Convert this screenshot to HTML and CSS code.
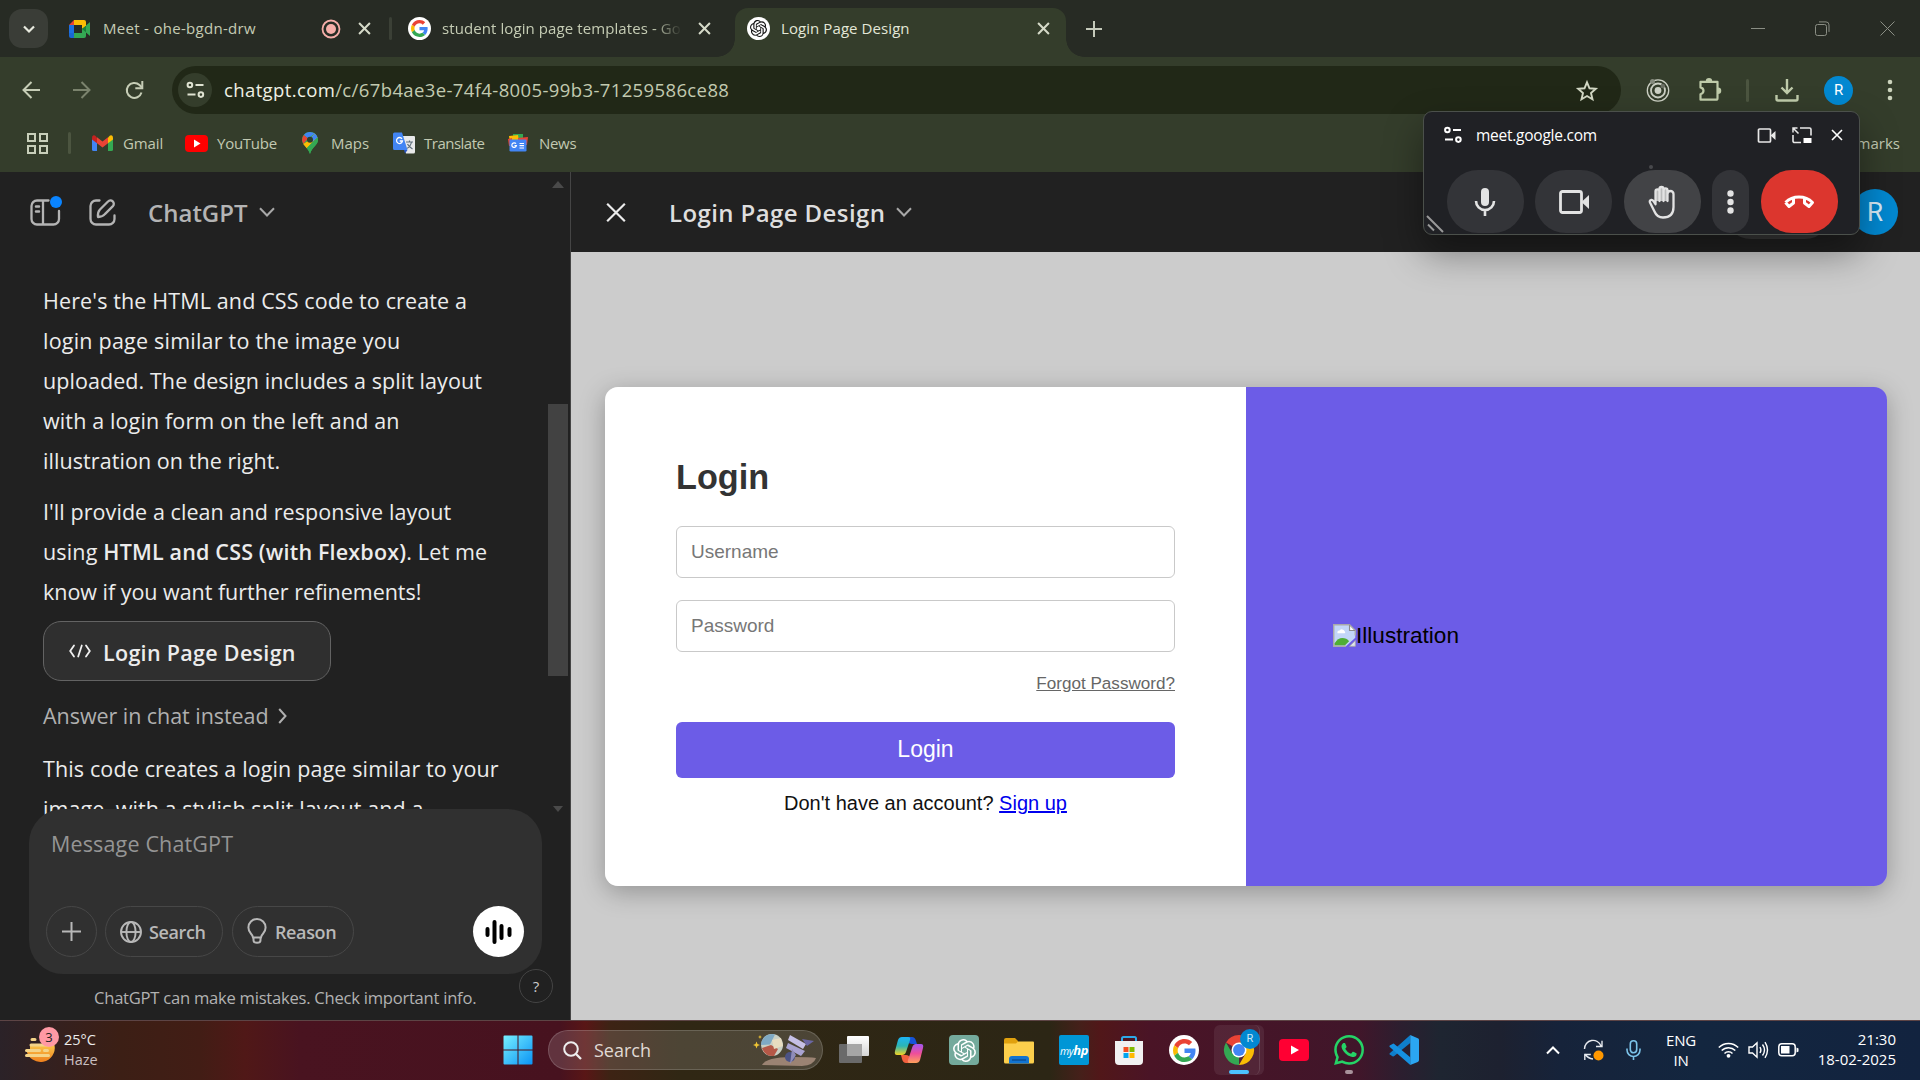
FILE: index.html
```html
<!DOCTYPE html>
<html lang="en">
<head>
<meta charset="utf-8">
<title>Login Page Design</title>
<link rel="stylesheet" href="styles.css">
</head>
<body>
<svg class="defs" width="0" height="0">
  <symbol id="openai" viewBox="0 0 24 24"><path fill="currentColor" d="M22.2819 9.8211a5.9847 5.9847 0 0 0-.5157-4.9108 6.0462 6.0462 0 0 0-6.5098-2.9A6.0651 6.0651 0 0 0 4.9807 4.1818a5.9847 5.9847 0 0 0-3.9977 2.9 6.0462 6.0462 0 0 0 .7427 7.0966 5.98 5.98 0 0 0 .511 4.9107 6.051 6.051 0 0 0 6.5146 2.9001A5.9847 5.9847 0 0 0 13.2599 24a6.0557 6.0557 0 0 0 5.7718-4.2058 5.9894 5.9894 0 0 0 3.9977-2.9001 6.0557 6.0557 0 0 0-.7475-7.0729zm-9.022 12.6081a4.4755 4.4755 0 0 1-2.8764-1.0408l.1419-.0804 4.7783-2.7582a.7948.7948 0 0 0 .3927-.6813v-6.7369l2.02 1.1686a.071.071 0 0 1 .038.052v5.5826a4.504 4.504 0 0 1-4.4945 4.4944zm-9.6607-4.1254a4.4708 4.4708 0 0 1-.5346-3.0137l.142.0852 4.783 2.7582a.7712.7712 0 0 0 .7806 0l5.8428-3.3685v2.3324a.0804.0804 0 0 1-.0332.0615L9.74 19.9502a4.4992 4.4992 0 0 1-6.1408-1.6464zM2.3408 7.8956a4.485 4.485 0 0 1 2.3655-1.9728V11.6a.7664.7664 0 0 0 .3879.6765l5.8144 3.3543-2.0201 1.1685a.0757.0757 0 0 1-.071 0l-4.8303-2.7865A4.504 4.504 0 0 1 2.3408 7.872zm16.5963 3.8558L13.1038 8.364 15.1192 7.2a.0757.0757 0 0 1 .071 0l4.8303 2.7913a4.4944 4.4944 0 0 1-.6765 8.1042v-5.6772a.79.79 0 0 0-.407-.667zm2.0107-3.0231l-.142-.0852-4.7735-2.7818a.7759.7759 0 0 0-.7854 0L9.409 9.2297V6.8974a.0662.0662 0 0 1 .0284-.0615l4.8303-2.7866a4.4992 4.4992 0 0 1 6.6802 4.66zM8.3065 12.863l-2.02-1.1638a.0804.0804 0 0 1-.038-.0567V6.0742a4.4992 4.4992 0 0 1 7.3757-3.4537l-.142.0805L8.704 5.459a.7948.7948 0 0 0-.3927.6813zm1.0976-2.3654l2.602-1.4998 2.6069 1.4998v2.9994l-2.5974 1.4997-2.6067-1.4997Z"/></symbol>
  <symbol id="google" viewBox="0 0 48 48">
    <path fill="#ea4335" d="M24 9.5c3.54 0 6.71 1.22 9.21 3.6l6.85-6.85C35.9 2.38 30.47 0 24 0 14.62 0 6.51 5.38 2.56 13.22l7.98 6.19C12.43 13.72 17.74 9.5 24 9.5z"/>
    <path fill="#4285f4" d="M46.98 24.55c0-1.57-.15-3.09-.38-4.55H24v9.02h12.94c-.58 2.96-2.26 5.48-4.78 7.18l7.73 6c4.51-4.18 7.09-10.36 7.09-17.65z"/>
    <path fill="#fbbc05" d="M10.53 28.59c-.48-1.45-.76-2.99-.76-4.59s.27-3.14.76-4.59l-7.98-6.19C.92 16.46 0 20.12 0 24c0 3.88.92 7.54 2.56 10.78l7.97-6.19z"/>
    <path fill="#34a853" d="M24 48c6.48 0 11.93-2.13 15.89-5.81l-7.73-6c-2.15 1.45-4.92 2.3-8.16 2.3-6.26 0-11.57-4.22-13.47-9.91l-7.98 6.19C6.51 42.62 14.62 48 24 48z"/>
  </symbol>
  <symbol id="close" viewBox="0 0 12 12"><path d="M1 1l10 10M11 1L1 11" fill="none" stroke="currentColor"/></symbol>
  <symbol id="chevron" viewBox="0 0 16 10"><path d="M1 1.2l7 7.3 7-7.3" fill="none" stroke="currentColor" stroke-width="2"/></symbol>
  <symbol id="tune" viewBox="0 0 18 18"><g fill="none" stroke="currentColor" stroke-width="2"><circle cx="3.4" cy="4" r="2.3"/><circle cx="14.4" cy="13.6" r="2.3"/><path d="M9 4h8M1 13.6h8"/></g></symbol>
  <symbol id="videocam" viewBox="0 0 30 24"><path d="M3.5 1.5h17a2 2 0 0 1 2 2v17a2 2 0 0 1-2 2h-17a2 2 0 0 1-2-2v-17a2 2 0 0 1 2-2z" fill="none" stroke="currentColor" stroke-width="2.8"/><path d="M22.5 12L30 5v14z" fill="currentColor"/></symbol>
</svg>

<div class="screen">
  <div class="tabstrip">
    <div class="tab-search"><svg width="12" height="8"><path d="M1 1.5l5 5 5-5" fill="none" stroke="#e8eadf" stroke-width="2.2"/></svg></div>
    <div class="tab tab-meet">
      <svg class="favicon" width="21" height="18" viewBox="0 0 21 18"><path fill="#1e6fe0" d="M0 5h5v8H0z"/><path fill="#1967d2" d="M0 13h5v5H2a2 2 0 0 1-2-2z"/><path fill="#ea4335" d="M0 5l5-5v5z"/><path fill="#fbbc04" d="M5 0h10a2 2 0 0 1 2 2v4l-4 3V5H5z"/><path fill="#34a853" d="M5 13h8V9l4-3v10a2 2 0 0 1-2 2H5z"/><path fill="#188038" d="M13 9l4-3.300v6.600z"/><path fill="#34a853" d="M17 5.500L21 2v14l-4-3.500z"/></svg>
      <span class="tab-title">Meet - ohe-bgdn-drw</span>
      <svg class="rec" width="20" height="20"><circle cx="10" cy="10" r="8.500" fill="none" stroke="#f6aea9" stroke-width="1.800"/><circle cx="10" cy="10" r="5" fill="#f6aea9"/></svg>
      <svg class="tab-x" width="13" height="13"><use href="#close" stroke-width="1.900"/></svg>
    </div>
    <div class="tab-sep"></div>
    <div class="tab tab-google">
      <span class="round-icon"><svg width="17" height="17"><use href="#google"/></svg></span>
      <span class="tab-title">student login page templates - Go</span>
      <svg class="tab-x" width="13" height="13"><use href="#close" stroke-width="1.900"/></svg>
    </div>
    <div class="tab tab-active">
      <span class="round-icon dark"><svg width="17" height="17"><use href="#openai"/></svg></span>
      <span class="tab-title">Login Page Design</span>
      <svg class="tab-x" width="13" height="13"><use href="#close" stroke-width="1.900"/></svg>
    </div>
    <svg class="new-tab" width="16" height="16"><path d="M8 0v16M0 8h16" stroke="#c4c9ba" stroke-width="2"/></svg>
    <div class="win-controls">
      <svg width="14" height="14"><path d="M0 6.500h14" stroke="#8a8e84"/></svg>
      <svg width="15" height="15"><rect x=".5" y="3.500" width="11" height="11" rx="2" fill="none" stroke="#8a8e84"/><path d="M4 .9h7a3 3 0 0 1 3 3v7" fill="none" stroke="#8a8e84"/></svg>
      <svg width="15" height="15"><path d="M.5 .5l14 14M14.500 .5l-14 14" stroke="#8a8e84"/></svg>
    </div>
  </div>

  <div class="toolbar">
    <svg class="nav-back" width="18" height="18"><path d="M18 9H2M9.500 1L1.500 9l8 8" fill="none" stroke="#c6cdb6" stroke-width="2"/></svg>
    <svg class="nav-fwd" width="18" height="18"><path d="M0 9h16M8.500 1l8 8-8 8" fill="none" stroke="#7b836d" stroke-width="2"/></svg>
    <svg class="nav-reload" width="19" height="18"><path d="M16.500 11.500A7.500 7.500 0 1 1 14.500 4L17 6.500" fill="none" stroke="#c6cdb6" stroke-width="2"/><path d="M17.300 0v7.200h-7" fill="none" stroke="#c6cdb6" stroke-width="2"/></svg>
    <div class="omnibox">
      <span class="site-info"><svg width="19" height="18"><use href="#tune"/></svg></span>
      <span class="url"><b>chatgpt.com</b>/c/67b4ae3e-74f4-8005-99b3-71259586ce88</span>
      <svg class="star" width="22" height="21" viewBox="0 0 22 21"><path d="M11 2.300l2.500 6 6.300.5-4.800 4.200 1.500 6.300L11 16l-5.500 3.300L7 13 2.200 8.800l6.300-.5z" fill="none" stroke="#d3d8c5" stroke-width="1.900"/></svg>
    </div>
    <div class="ext-row">
      <svg width="24" height="24" viewBox="0 0 24 24"><g fill="none" stroke="#ccd0c4"><circle cx="12" cy="12.500" r="10.700" stroke-width="1.300"/><circle cx="12" cy="12.500" r="7" stroke-width="1.800"/></g><circle cx="12" cy="12.500" r="3.400" fill="#ccd0c4"/><circle cx="6.500" cy="3.500" r="2.500" fill="#858a7d"/><circle cx="16.800" cy="8" r="2.200" fill="#6c7165"/></svg>
      <svg width="24" height="24" viewBox="0 0 24 24"><path d="M2.500 3.800h17v16.400a1.500 1.500 0 0 1-1.500 1.500H2.500v-5.500q3-.8 3-3.400t-3-3.400z" fill="none" stroke="#bfcbaa" stroke-width="2.200" stroke-linejoin="round"/><path d="M7.800 3.300a3.200 3.200 0 0 1 6.400 0zM20 9.500a3.200 3.200 0 0 1 0 6.500z" fill="#bfcbaa"/></svg>
      <i class="tb-sep"></i>
      <svg width="24" height="24" viewBox="0 0 24 24"><path d="M12 1v13M6.500 9.500L12 15l5.500-5.500M1.500 17v4a1.500 1.500 0 0 0 1.500 1.500h18a1.500 1.500 0 0 0 1.500-1.500v-4" fill="none" stroke="#bfcbaa" stroke-width="2.400"/></svg>
      <span class="avatar small">R</span>
      <svg width="6" height="22"><g fill="#ccd4bd"><circle cx="3" cy="3" r="2.300"/><circle cx="3" cy="11" r="2.300"/><circle cx="3" cy="19" r="2.300"/></g></svg>
    </div>
  </div>

  <div class="bookmarks">
    <svg class="apps" width="21" height="21"><g fill="none" stroke="#c8cfba" stroke-width="2"><rect x="1" y="1" width="7" height="7"/><rect x="13" y="1" width="7" height="7"/><rect x="1" y="13" width="7" height="7"/><rect x="13" y="13" width="7" height="7"/></g></svg>
    <i class="bm-sep"></i>
    <span class="bm bm1"><svg width="21" height="16" viewBox="0 0 21 16"><path fill="#4285f4" d="M0 3l5 3.500V16H1.500A1.500 1.500 0 0 1 0 14.500z"/><path fill="#34a853" d="M21 3l-5 3.500V16h3.500a1.500 1.500 0 0 0 1.500-1.500z"/><path fill="#fbbc04" d="M16 2.500L18 .6Q21-.6 21 3v1.500l-5 3.700z"/><path fill="#c5221f" d="M5 2.500L3 .6Q0-.6 0 3v1.500l5 3.700z"/><path fill="#ea4335" d="M5 2.200l5.500 4.200L16 2.200v6l-5.500 4.200L5 8.200z"/></svg><span>Gmail</span></span>
    <span class="bm bm2"><svg width="23" height="17"><rect width="23" height="17" rx="4" fill="#f00"/><path d="M9 4.500v8l6.500-4z" fill="#fff"/></svg><span>YouTube</span></span>
    <span class="bm bm3"><svg width="16" height="22" viewBox="0 0 16 22"><path d="M8 0C3.500 0 0 3.500 0 8c0 5 6 7 8 14 2-7 8-9 8-14 0-4.500-3.500-8-8-8z" fill="#34a853"/><path d="M8 0C5.500 0 3.300 1.100 1.900 2.900L6 6.500 12.800 1.600A8 8 0 0 0 8 0z" fill="#4285f4"/><path d="M1.900 2.900A8 8 0 0 0 0 8l1.200 4L6 6.500z" fill="#ea4335"/><path d="M1.200 12l3.500 4.300 8-8.300L15.500 5.500 12.800 1.600 6 9z" fill="#fbbc04"/><path d="M12.800 1.600L8 7 10 10l5.500-4.500A8 8 0 0 0 12.800 1.600z" fill="#4285f4"/><path d="M15.500 5.500L4.700 16.300C6 18 7.200 19.500 8 22c2-7 8-9 8-14z" fill="#34a853"/><circle cx="8" cy="7.800" r="3" fill="#303d2b"/></svg><span>Maps</span></span>
    <span class="bm bm4"><svg width="22" height="22" viewBox="0 0 22 22"><path d="M9 4h12a1.200 1.200 0 0 1 1 1v15a1.500 1.500 0 0 1-1.500 1.500H13z" fill="#e8e9ea"/><path d="M13 10h7M16.500 8.500V10M18.500 10q-1 5-5 6.500M14.500 12q1.500 3 5 5" stroke="#5f6f7c" fill="none" stroke-width="1.200"/><path d="M1.500.5H9l5.500 17.500H1.500A1.500 1.500 0 0 1 0 16.500V2A1.500 1.500 0 0 1 1.500.5z" fill="#4285f4"/><path d="M14.500 18L12 21.500 11 18z" fill="#2b57c4"/><path d="M9 6.800A3 3 0 1 0 9.500 9H6.700" fill="none" stroke="#fff" stroke-width="1.300"/></svg><span>Translate</span></span>
    <span class="bm bm5"><svg width="20" height="18" viewBox="0 0 20 18"><path fill="#34a853" d="M5 0h10v6H5z"/><path fill="#fbbc04" d="M1 2l9-1 1 6-9 2z"/><path fill="#ea4335" d="M10 4l10-1-1 8h-9z"/><path fill="#ea4335" d="M0 5l4-1v8H1z"/><rect x="1.500" y="5.500" width="17" height="12" rx="1.300" fill="#4285f4"/><path d="M8 9.700a2.300 2.300 0 1 0 .4 2H6.500M11.500 9.500H16M11.500 11.700H16M11.500 14H16" fill="none" stroke="#fff" stroke-width="1.200"/></svg><span>News</span></span>
    <span class="bm-more"><span>All Bookmarks</span></span>
  </div>

  <div class="page">
    <div class="chat">
      <div class="chat-main">
        <div class="chat-header">
          <span class="sidebar-icon"><svg width="30" height="28" viewBox="0 0 30 28"><path d="M18.500 2.500H7A5.500 5.500 0 0 0 1.500 8v13A5.500 5.500 0 0 0 7 26.500h16.500a5.500 5.500 0 0 0 5.500-5.500v-8M13 2.500v24" fill="none" stroke="#b4b4b4" stroke-width="2.300" stroke-linecap="round"/><path d="M6 8.500h3M6 13.500h3" stroke="#b4b4b4" stroke-width="2.500" stroke-linecap="round"/></svg><i></i></span>
          <svg class="compose" width="27" height="27" viewBox="0 0 27 27"><g fill="none" stroke="#b4b4b4" stroke-width="2.300" stroke-linecap="round"><path d="M10.500 1.500H7A5.500 5.500 0 0 0 1.500 7v13A5.500 5.500 0 0 0 7 25.500h13a5.500 5.500 0 0 0 5.500-5.500v-3.500"/><path d="M9 18q-.5-5 2-7.500l8-8a3.100 3.100 0 0 1 4.900 4.600l-8 8Q14 17.500 9 18z" stroke-linejoin="round"/></g></svg>
          <span class="model">ChatGPT</span>
          <svg class="model-chev" width="16" height="10"><use href="#chevron"/></svg>
        </div>
        <div class="messages">
          <p><span>Here's the HTML and CSS code to create a</span><span class="wide">login page similar to the image you</span><span class="tight">uploaded. The design includes a split layout</span><span>with a login form on the left and an</span><span class="tight">illustration on the right.</span></p>
          <p><span class="tight">I'll provide a clean and responsive layout</span><span class="mixed">using <b>HTML and CSS (with Flexbox)</b>. Let me</span><span class="flat">know if you want further refinements!</span></p>
          <div class="canvas-btn"><svg width="22" height="14" viewBox="0 0 22 14"><path d="M5 1.500L1.200 7 5 12.500M17 1.500L20.800 7 17 12.500M12.800 1.500L9.200 12.500" fill="none" stroke="#f0f0f0" stroke-width="1.800" stroke-linecap="round"/></svg><span>Login Page Design</span></div>
          <div class="answer"><span>Answer in chat instead</span><svg width="9" height="16"><path d="M1.200 1l6.300 7-6.300 7" fill="none" stroke="#b0b0b0" stroke-width="2"/></svg></div>
          <p><span>This code creates a login page similar to your</span><span class="tight">image, with a stylish split layout and a</span></p>
        </div>
        <div class="composer">
          <div class="placeholder">Message ChatGPT</div>
          <div class="tools">
            <span class="pill plus"><svg width="19" height="19"><path d="M9.500 0v19M0 9.500h19" stroke="#b8b8b8" stroke-width="2"/></svg></span>
            <span class="pill search"><svg width="24" height="22" viewBox="0 0 24 22"><g fill="none" stroke="#b8b8b8" stroke-width="1.900"><circle cx="12" cy="11" r="10"/><ellipse cx="12" cy="11" rx="4.600" ry="10"/><path d="M2 11h20"/></g></svg><span>Search</span></span>
            <span class="pill reason"><svg width="20" height="24" viewBox="0 0 20 24"><path d="M6 17.500q-.3-2-2-3.800a8.600 8.600 0 1 1 12 0q-1.700 1.800-2 3.800zM6.500 18v2.200q0 2.500 3.500 2.500t3.500-2.500V18" fill="none" stroke="#b8b8b8" stroke-width="2"/></svg><span>Reason</span></span>
            <span class="voice"><svg width="27" height="24"><path d="M2.500 9v6M9.500 2v20M16.500 6v12M24.500 9v6" stroke="#000" stroke-width="4" stroke-linecap="round"/></svg></span>
          </div>
        </div>
        <div class="disclaimer">ChatGPT can make mistakes. Check important info.</div>
        <span class="help">?</span>
      </div>
      <div class="scrollbar"><i class="up"></i><i class="thumb"></i><i class="down"></i></div>
    </div>

    <div class="canvas">
      <div class="canvas-header">
        <svg width="20" height="21" viewBox="0 0 12 12" class="canvas-x"><path d="M.7.7l10.600 10.600M11.300.7L.7 11.300" stroke="#ececec" stroke-width="1.300"/></svg>
        <span class="canvas-title">Login Page Design</span>
        <svg class="canvas-chev" width="16" height="10"><use href="#chevron"/></svg>
        <span class="hidden-btn"></span>
        <span class="avatar big">R</span>
      </div>
      <div class="preview">
        <div class="card">
          <div class="form">
            <h2>Login</h2>
            <div class="field">Username</div>
            <div class="field">Password</div>
            <div class="forgot"><u>Forgot Password?</u></div>
            <div class="login-btn">Login</div>
            <div class="signup">Don't have an account? <u>Sign up</u></div>
          </div>
          <div class="art"><svg width="23" height="23" viewBox="0 0 16 16"><path d="M.5.5h11l4 4v5L9 15.500H.5z" fill="#c3d6f8"/><path d="M1 15v-1.500q2.500-3.800 5.500-3.800t4.700 2.300L8.200 15z" fill="#4fae35"/><path d="M3 6.200a1.500 1.500 0 0 1 1.600-1.600 2 2 0 0 1 3.500.4 1 1 0 0 1 .1 1.500H3.200z" fill="#fff"/><path d="M11.500.5v4h4z" fill="#fff"/><path d="M9 15.500H.5V.5h11l4 4V8" fill="none" stroke="#a9a9a9"/><path d="M11.500.5v4h4" fill="none" stroke="#8d8d8d" stroke-width=".8"/><path d="M15.500 11.500v4h-4z" fill="#dfe5ee" stroke="#a9a9a9" stroke-width=".6"/></svg><span>Illustration</span></div>
        </div>
      </div>
    </div>
  </div>

  <div class="taskbar">
    <div class="weather">
      <span class="weather-icon"><svg width="30" height="29" viewBox="0 0 30 29"><defs><linearGradient id="sun" x1="0" y1="0" x2="0" y2="1"><stop offset="0" stop-color="#fbc64a"/><stop offset="1" stop-color="#ee7f1d"/></linearGradient></defs><path d="M5 9h24.500a13.500 13.500 0 0 1-28 5.500H5z" fill="url(#sun)"/><path d="M7 3.500h3M6 9h16M1.500 14.500h13M19.500 14.500h3M1.500 19.500h22" stroke="#f4d489" stroke-width="3" stroke-linecap="round"/></svg><i>3</i></span>
      <span class="weather-text"><span>25°C</span><small>Haze</small></span>
    </div>
    <div class="dock">
      <svg class="ti" width="30" height="30"><defs><linearGradient id="win" x1="0" y1="0" x2="1" y2="1"><stop offset="0" stop-color="#77f0ff"/><stop offset="1" stop-color="#0a93f5"/></linearGradient></defs><path fill="url(#win)" d="M.5 1.500A1 1 0 0 1 1.500.5H14.500v14H.5zM15.500.5h13a1 1 0 0 1 1 1v13h-14zM.5 15.500h14v14h-13a1 1 0 0 1-1-1zM15.500 15.500h14v13a1 1 0 0 1-1 1h-13z"/></svg>
      <div class="search-pill"><svg width="19" height="19"><circle cx="8" cy="8" r="6.800" fill="none" stroke="#eee" stroke-width="2"/><path d="M13 13l5 5" stroke="#eee" stroke-width="2.300"/></svg><span>Search</span>
        <svg class="art-icon" width="62" height="31" viewBox="0 0 62 31"><path d="M8 30q4-8 30-8 18 0 24 1-2 7-14 8z" fill="#9b8373"/><circle cx="18" cy="10" r="11" fill="#c9cfc4"/><path d="M7 10a11 11 0 0 1 14-10.500l-5 10z" fill="#7fa9c4"/><path d="M8 13l9-3 7 4-4 7a11 11 0 0 1-12-8z" fill="#b55847"/><path d="M18 5l9-2 2 8-9 3z" fill="#e8dcc0"/><path d="M2.500 6.500l1 2.500 2.500 1-2.500 1-1 2.500-1-2.500-2.500-1 2.500-1zM6 0l.6 1.400L8 2l-1.400.6L6 4l-.6-1.400L4 2l1.400-.6z" fill="#f0c534"/><path d="M36 0l16 9-3 5-15-9z" fill="#c6c0e6"/><path d="M34 8l17 8-4 5-15-8z" fill="#a9a3d1"/><path d="M48 4l12 2-7 5z" fill="#6b67a3"/><circle cx="36" cy="22" r="5" fill="#4c5385"/><path d="M38 14l4 6-6 9z" fill="#8f8cb8"/></svg>
      </div>
      <svg class="ti" width="30" height="30"><defs><linearGradient id="tv" x1="0" y1="0" x2="0" y2="1"><stop offset="0" stop-color="#fff"/><stop offset="1" stop-color="#d5d5d5"/></linearGradient></defs><rect x="0" y="9" width="23" height="19" rx="1" fill="#6a6a6a"/><rect x="8" y="1" width="22" height="20" rx="1" fill="url(#tv)"/><path d="M8 9h15v12H8z" fill="#a5a5a5"/></svg>
      <svg class="ti" width="30" height="30" viewBox="0 0 30 30"><defs><linearGradient id="cp1" x1="0" y1="0" x2="0" y2="1"><stop offset="0" stop-color="#1db5f5"/><stop offset=".5" stop-color="#2bb5b5"/><stop offset="1" stop-color="#f4d321"/></linearGradient><linearGradient id="cp2" x1="0" y1="0" x2="0" y2="1"><stop offset="0" stop-color="#a156f0"/><stop offset=".5" stop-color="#ee4f9a"/><stop offset="1" stop-color="#ffa15b"/></linearGradient></defs><path d="M13 2h5q3 0 4 4l1 3h-5q-3 0-4-2z" fill="#1653d8"/><path d="M8 2h6q3 0 2 3l-4 12q-1 3-4 3H3q-3 0-2-4L4 5q1-3 4-3z" fill="url(#cp1)"/><path d="M17 28h-5q-3 0-4-4l-1-4h5q3 0 4 3z" fill="#f2603e"/><path d="M22 28h-6q-3 0-2-3l4-12q1-4 4-4h5q3 0 2 4l-3 12q-1 3-4 3z" fill="url(#cp2)"/></svg>
      <span class="ti gpt"><svg width="23" height="23"><use href="#openai"/></svg></span>
      <svg class="ti" width="30" height="30"><path d="M0 5a2 2 0 0 1 2-2h9l3 3v5H0z" fill="#e0a10e"/><path d="M0 8.500h12l2-2h15a1 1 0 0 1 1 1V27a1.500 1.500 0 0 1-1.500 1.500h-27A1.500 1.500 0 0 1 0 27z" fill="#fccf4c"/><path d="M5 28.500V24a3 3 0 0 1 3-3h14a3 3 0 0 1 3 3v4.500z" fill="#1274d1"/><path d="M8 25h14" stroke="#0b4f96" stroke-width="1.500"/></svg>
      <span class="ti hp"><span>my<b>hp</b></span></span>
      <svg class="ti" width="30" height="30"><path d="M8 7V3.500A1.500 1.500 0 0 1 9.500 2h11A1.500 1.500 0 0 1 22 3.500V7" fill="none" stroke="#2da9e9" stroke-width="2"/><path d="M1 6h28v20a4 4 0 0 1-4 4H5a4 4 0 0 1-4-4z" fill="#f1f1f1"/><path d="M9.500 12h5v5h-5z" fill="#f25022"/><path d="M15.500 12h5v5h-5z" fill="#7fba00"/><path d="M9.500 18h5v5h-5z" fill="#00a4ef"/><path d="M15.500 18h5v5h-5z" fill="#ffb900"/></svg>
      <span class="ti round-icon lg"><svg width="23" height="23"><use href="#google"/></svg></span>
      <span class="ti chrome"><svg width="30" height="30" viewBox="0 0 48 48"><path fill="#ea4335" d="M24 24L3.200 12A24 24 0 0 1 44.800 12z"/><path fill="#34a853" d="M24 24v24A24 24 0 0 1 3.200 12l10.400 18z"/><path fill="#fbbc04" d="M24 12h20.800A24 24 0 0 1 24 48l10.400-18z"/><circle cx="24" cy="24" r="12" fill="#fff"/><circle cx="24" cy="24" r="9.500" fill="#4285f4"/></svg><i class="badge">R</i><i class="active-bar"></i></span>
      <svg class="ti" width="30" height="30"><rect y="4" width="30" height="22" rx="4" fill="#ff0033"/><path d="M12 10.500v9l8-4.500z" fill="#fff"/></svg>
      <span class="ti wa"><svg width="30" height="30" viewBox="0 0 24 24"><path fill="#25d366" d="M17.472 14.382c-.297-.149-1.758-.867-2.030-.967-.273-.099-.471-.148-.67.15-.197.297-.767.966-.94 1.164-.173.199-.347.223-.644.075-.297-.15-1.255-.463-2.390-1.475-.883-.788-1.480-1.761-1.653-2.059-.173-.297-.018-.458.13-.606.134-.133.298-.347.446-.52.149-.174.198-.298.298-.497.099-.198.05-.371-.025-.52-.075-.149-.669-1.612-.916-2.207-.242-.579-.487-.5-.669-.51-.173-.008-.371-.01-.57-.01-.198 0-.52.074-.792.372-.272.297-1.040 1.016-1.040 2.479 0 1.462 1.065 2.875 1.213 3.074.149.198 2.096 3.200 5.077 4.487.709.306 1.262.489 1.694.625.712.227 1.360.195 1.871.118.571-.085 1.758-.719 2.006-1.413.248-.694.248-1.289.173-1.413-.074-.124-.272-.198-.57-.347m-5.421 7.403h-.004a9.870 9.870 0 0 1-5.031-1.378l-.361-.214-3.741.982.998-3.648-.235-.374a9.860 9.860 0 0 1-1.510-5.260c.001-5.450 4.436-9.884 9.888-9.884 2.640 0 5.122 1.030 6.988 2.898a9.825 9.825 0 0 1 2.893 6.994c-.003 5.450-4.437 9.884-9.885 9.884m8.413-18.297A11.815 11.815 0 0 0 12.050 0C5.495 0 .16 5.335.157 11.892c0 2.096.547 4.142 1.588 5.945L.057 24l6.305-1.654a11.882 11.882 0 0 0 5.683 1.448h.005c6.554 0 11.890-5.335 11.893-11.893a11.821 11.821 0 0 0-3.480-8.413Z"/></svg><i class="idle-bar"></i></span>
      <svg class="ti" width="30" height="30" viewBox="0 0 24 24"><path fill="#0f7ecb" d="M17 6.300L4.200 16.800Q3.500 17.400 2.800 16.900L.6 15.600Q0 15.100.6 14.500L17 0z"/><path fill="#1590e0" d="M17 17.700L4.200 7.200Q3.500 6.600 2.800 7.100L.6 8.400Q0 8.900.6 9.500L17 24z"/><path fill="#2ba6f2" d="M17 0l6 2.500a1.500 1.500 0 0 1 1 1.300v16.400a1.500 1.500 0 0 1-1 1.300L17 24z"/></svg>
    </div>
    <div class="tray">
      <svg class="tr-up" width="14" height="9"><path d="M1 7.500l6-6 6 6" fill="none" stroke="#fff" stroke-width="2"/></svg>
      <svg class="tr-sync" width="21" height="21"><g fill="none" stroke="#e6e9ee" stroke-width="1.400"><path d="M1.500 9A8.500 8.500 0 0 1 18 6M19 .8V6.500h-6M10 19Q5 18.500 2 14M1.800 20v-5.500h6"/></g><circle cx="15.500" cy="15.500" r="5" fill="#ff9800"/></svg>
      <svg class="tr-mic" width="15" height="20"><g fill="none" stroke="#7cc4ea" stroke-width="1.600"><rect x="4.300" y=".8" width="6.400" height="12" rx="3.200"/><path d="M1 8.500v1.500a6.500 6.500 0 0 0 13 0V8.500M7.500 16.500V20"/></g></svg>
      <span class="lang"><span>ENG</span><span>IN</span></span>
      <svg class="tr-wifi" width="21" height="16"><g fill="none" stroke="#fff" stroke-width="1.500"><path d="M.8 5.500a13.500 13.500 0 0 1 19.400 0M3.700 8.500a9.500 9.500 0 0 1 13.600 0M6.500 11.500a5.500 5.500 0 0 1 8 0"/></g><circle cx="10.500" cy="13.800" r="1.900" fill="#fff"/></svg>
      <svg class="tr-vol" width="21" height="18"><g fill="none" stroke="#fff" stroke-width="1.400"><path d="M1 6h3.500L9 1.800v14.400L4.500 12H1z"/><path d="M12 6q1.800 3 0 6M14.500 3.500q4 5.500 0 11M17 1.200q5 7.800 0 15.600"/></g></svg>
      <svg class="tr-bat" width="21" height="14"><rect x=".8" y=".8" width="16.400" height="12" rx="3" fill="none" stroke="#fff" stroke-width="1.500"/><path d="M3 3h8.500v7.500H3z" fill="#fff"/><path d="M18.500 4.500v5l2-1v-3z" fill="#fff"/></svg>
      <span class="clock"><span>21:30</span><span>18-02-2025</span></span>
    </div>
  </div>

  <div class="meet">
    <div class="meet-head">
      <svg width="18" height="18"><use href="#tune"/></svg>
      <span>meet.google.com</span>
      <svg class="mh-cam" width="19" height="15" viewBox="0 0 19 15"><path d="M2.500 1h10a1 1 0 0 1 1 1v11a1 1 0 0 1-1 1h-10a1 1 0 0 1-1-1V2a1 1 0 0 1 1-1z" fill="none" stroke="#e8e8e8" stroke-width="1.700"/><path d="M13.500 7.500L18.500 3v9z" fill="#e8e8e8"/></svg>
      <svg class="mh-pip" width="20" height="17" viewBox="0 0 20 17"><path d="M8 1h9.500A1.500 1.500 0 0 1 19 2.500v6M1 8v6a1.500 1.500 0 0 0 1.500 1.500H9" fill="none" stroke="#e8e8e8" stroke-width="1.600"/><path d="M1.500 1.500l5 5M1 5.500V1h4.500" fill="none" stroke="#e8e8e8" stroke-width="1.500"/><path d="M11.500 11h8v5h-8z" fill="#fff"/></svg>
      <svg class="mh-x" width="12" height="12"><use href="#close" stroke-width="1.600"/></svg>
    </div>
    <div class="meet-row">
      <span class="mb"><svg width="22" height="28" viewBox="0 0 22 28"><rect x="7" y="0" width="8" height="18" rx="4" fill="#e3e3e3"/><path d="M2 13a9 9 0 0 0 18 0M11 22v6" fill="none" stroke="#e3e3e3" stroke-width="2.600"/></svg></span>
      <span class="mb"><svg width="30" height="24"><use href="#videocam"/></svg></span>
      <span class="mb hand"><svg width="28" height="34" viewBox="0 0 28 34"><path d="M7.500 17V6.500a2 2 0 0 1 4 0V16 4a2 2 0 0 1 4 0v12V5.500a2 2 0 0 1 4 0V16 9a2.300 2.300 0 0 1 6 0v13q0 10.500-10.500 10.500-6 0-8.500-6L2 17.500q-.8-2 1-2.500 1.500-.3 2.500 1.200l2 3z" fill="none" stroke="#e3e3e3" stroke-width="2.300" stroke-linejoin="round"/><path d="M8 5.500h3.500V16H8zM12 3h3.500v13H12zM16 5h3.500v11H16z" fill="#e3e3e3" opacity=".75"/></svg></span>
      <span class="mb dots"><svg width="7" height="24"><g fill="#e3e3e3"><circle cx="3.500" cy="3.500" r="3.200"/><circle cx="3.500" cy="12" r="3.200"/><circle cx="3.500" cy="20.500" r="3.200"/></g></svg></span>
      <span class="mb end"><svg width="32" height="14" viewBox="0 0 32 14"><path d="M2.500 7.500Q8 2 16 2t13.500 5.500L26 11.500 21.500 8V4M2.500 7.500L6 11.500 10.500 8V4" fill="none" stroke="#fff" stroke-width="3" stroke-linejoin="round"/></svg></span>
    </div>
    <svg class="grip" width="18" height="18"><path d="M1 1l16 16M2 9.500l6 6" stroke="#999" stroke-width="2"/></svg>
    <i class="speck"></i>
  </div>
</div>
</body>
</html>
```
FILE: styles.css
```css
* { box-sizing: border-box; }
body { margin: 0; background: #212121; font-family: "Open Sans", "Noto Sans", sans-serif; color: #ececec; }
svg { display: block; flex: none; overflow: visible; }
i { font-style: normal; display: block; }
.defs { position: absolute; }
.screen { position: relative; width: 1920px; height: 1080px; overflow: hidden; display: flex; flex-direction: column; white-space: nowrap; }

/* Tab strip */
.tabstrip { height: 57px; background: #272b24; display: flex; align-items: center; flex: none; padding-left: 9px; }
.tab-search { width: 39px; height: 39px; border-radius: 13px; background: #3a3d37; display: flex; align-items: center; justify-content: center; }
.tab { display: flex; align-items: center; font-size: 15px; color: #c5ccb4; }
.tab-title { overflow: hidden; line-height: 24px; margin-top: -1px; }
.tab-x { color: #d5dac8; }
.tab-meet { width: 324px; padding-left: 21px; }
.tab-meet .tab-title { margin-left: 13px; width: 217px; flex: none; letter-spacing: .3px; }
.rec { margin: 0 17px 0 1px; }
.tab-sep { width: 3px; height: 23px; border-radius: 2px; background: #3b4036; margin-left: 17px; }
.tab-google { margin-left: 16px; width: 327px; }
.round-icon { width: 23px; height: 23px; border-radius: 50%; background: #fff; display: flex; align-items: center; justify-content: center; flex: none; }
.round-icon.dark { color: #111; }
.tab-google .tab-title { margin-left: 11px; width: 240px; margin-right: 16px; letter-spacing: .09px; -webkit-mask-image: linear-gradient(90deg, #000 88%, transparent); mask-image: linear-gradient(90deg, #000 88%, transparent); }
.tab-active { position: relative; align-self: flex-end; height: 49px; width: 331px; background: #343d2b; border-radius: 13px 13px 0 0; padding: 0 16px 9px 12px; color: #e3e7d8; }
.tab-active::before, .tab-active::after { content: ""; position: absolute; bottom: 0; width: 18px; height: 18px; }
.tab-active::before { left: -18px; background: radial-gradient(circle at 0 0, transparent 17.5px, #343d2b 18px); }
.tab-active::after { right: -18px; background: radial-gradient(circle at 100% 0, transparent 17.5px, #343d2b 18px); }
.tab-active .tab-title { margin-left: 11px; flex: 1; letter-spacing: .08px; margin-top: 0; }
.new-tab { margin-left: 20px; }
.win-controls { display: flex; align-items: center; gap: 50px; margin-left: auto; margin-right: 25px; }

/* Toolbar */
.toolbar { height: 66px; background: #343d2b; display: flex; align-items: center; flex: none; padding: 0 0 0 22px; }
.nav-fwd { margin-left: 33px; }
.nav-reload { margin-left: 34px; }
.omnibox { margin-left: 28px; width: 1449px; height: 48px; border-radius: 24px; background: #212817; display: flex; align-items: center; padding: 0 23px 0 6px; }
.site-info { width: 34px; height: 34px; border-radius: 50%; background: #343d2b; display: flex; align-items: center; justify-content: center; color: #dfe3d2; }
.url { margin: -2px 0 0 12px; font-size: 18.5px; letter-spacing: .38px; color: #c2cab0; }
.url b { font-weight: 400; color: #eef1e4; }
.star { margin-left: auto; }
.ext-row { display: flex; align-items: center; margin-left: 25px; }
.ext-row > :nth-child(2) { margin-left: 28px; }
.tb-sep { width: 3px; height: 23px; border-radius: 2px; background: #4c5540; margin: 0 26px 0 24px; }
.avatar { background: #0288d1; color: #fff; border-radius: 50%; display: flex; align-items: center; justify-content: center; font-family: Roboto, sans-serif; flex: none; }
.avatar.small { width: 29px; height: 29px; font-size: 15px; margin: 0 34px 0 25px; }
.avatar.big { width: 46px; height: 46px; font-size: 26px; color: #d8ecf8; }

.bookmarks { height: 49px; background: #343d2b; display: flex; align-items: center; flex: none; padding: 0 0 9px 27px; font-size: 15px; color: #c2c9b2; }
.bm-sep { width: 3px; height: 22px; border-radius: 2px; background: #4c5540; margin-left: 20px; }
.bm { display: flex; align-items: center; line-height: 22px; }
.bm1 { margin-left: 21px; gap: 10px; width: 93px; letter-spacing: -.1px; }
.bm2 { gap: 9px; width: 117px; letter-spacing: -.25px; }
.bm3 { gap: 13px; width: 91px; }
.bm4 { gap: 9px; width: 115px; letter-spacing: -.5px; }
.bm5 { gap: 11px; letter-spacing: -.3px; }
.bm-more { margin-left: auto; margin-right: 20px; }

/* Page */
.page { display: flex; height: 848px; flex: none; }
.chat { width: 571px; display: flex; background: #212121; border-right: 1px solid #454545; }
.chat-main { position: relative; width: 547px; display: flex; flex-direction: column; }
.chat-header { height: 80px; flex: none; display: flex; align-items: center; padding-left: 30px; }
.sidebar-icon { position: relative; }
.sidebar-icon i { position: absolute; left: 20px; top: -2px; width: 12px; height: 12px; border-radius: 50%; background: #0a84ff; }
.compose { margin-left: 29px; }
.model { font-size: 24px; font-weight: 600; color: #b4b4b4; margin-left: 32px; }
.model-chev { margin-left: 11px; color: #a8a8a8; }
.messages { height: 577px; flex: none; overflow: hidden; padding: 29px 0 0 43px; font-size: 21.5px; line-height: 40px; letter-spacing: .13px; }
.messages p { margin: 0; }
.messages p + p { margin-top: 11px; }
.messages p > span { display: block; }
.messages .wide { letter-spacing: .22px; }
.messages .tight { letter-spacing: .07px; }
.messages .flat { letter-spacing: -.03px; }
.messages .mixed { letter-spacing: .17px; }
.messages b { font-weight: 600; }
.canvas-btn { margin-top: 9px; width: 288px; height: 60px; border: 1px solid #636363; border-radius: 18px; background: #2f2f2f; display: flex; align-items: center; gap: 12px; padding: 0 0 0 25px; font-weight: 600; font-size: 21.5px; letter-spacing: .3px; }
.canvas-btn span { padding-top: 3px; }
.answer { margin-top: 15px; margin-bottom: 13px; display: flex; align-items: center; gap: 9px; color: #b0b0b0; letter-spacing: -.05px; }
.composer { position: relative; margin: -20px 5px 0 29px; height: 165px; flex: none; border-radius: 34px; background: #303030; padding: 15px 18px 0 17px; }
.placeholder { padding-left: 5px; font-size: 21.5px; line-height: 40px; color: #959595; letter-spacing: .15px; }
.tools { display: flex; align-items: center; margin-top: 42px; }
.pill { height: 51px; border: 1px solid #474747; border-radius: 26px; display: flex; align-items: center; font-size: 18px; font-weight: 600; color: #b8b8b8; letter-spacing: -.38px; }
.pill.plus { width: 51px; justify-content: center; }
.pill.search { width: 118px; margin-left: 8px; padding-left: 13px; gap: 6px; }
.pill.reason { width: 122px; margin-left: 9px; padding-left: 14px; gap: 8px; }
.voice { margin-left: auto; width: 51px; height: 51px; border-radius: 50%; background: #fff; display: flex; align-items: center; justify-content: center; }
.disclaimer { padding-left: 94px; font-size: 16.6px; letter-spacing: -.25px; line-height: 46px; margin-top: 1px; color: #b2b2b2; }
.help { position: absolute; left: 519px; top: 797px; width: 34px; height: 34px; border: 1px solid #444; border-radius: 50%; background: #212121; display: flex; align-items: center; justify-content: center; font-size: 15px; color: #ccc; }
.scrollbar { width: 23px; display: flex; flex-direction: column; align-items: center; padding: 9px 2px 0 0; height: 640px; }
.scrollbar .up { border: 6px solid transparent; border-top: 0; border-bottom: 7px solid #4a4a4a; }
.scrollbar .thumb { width: 20px; height: 272px; margin-top: 216px; background: #424242; }
.scrollbar .down { margin-top: auto; border: 5px solid transparent; border-bottom: 0; border-top: 6px solid #4a4a4a; }

.canvas { flex: 1; display: flex; flex-direction: column; }
.canvas-header { position: relative; height: 80px; background: #212121; display: flex; align-items: center; padding-left: 35px; padding-right: 22px; }
.canvas-title { margin-left: 43px; font-size: 24px; font-weight: 600; color: #dedede; letter-spacing: .4px; }
.canvas-chev { margin-left: 11px; color: #a8a8a8; }
.hidden-btn { margin-left: auto; margin-right: 20px; width: 108px; height: 54px; border-radius: 27px; background: #3a3a3a; }
.preview { flex: 1; background: #ccc; padding: 135px 33px 0 34px; }
.card { display: flex; height: 499px; border-radius: 13px; overflow: hidden; box-shadow: 0 6px 26px rgba(0, 0, 0, .28); font-family: "Liberation Sans", Arial, sans-serif; }
.form { width: 641px; background: #fff; padding: 64px 71px 0; color: #111; }
.form h2 { margin: 0; font-size: 34.2px; line-height: 52px; color: #333; }
.field { height: 52px; margin-top: 22px; border: 1px solid #c9c9c9; border-radius: 6px; padding-left: 14px; font-size: 19px; line-height: 49px; color: #777; }
.form h2 + .field { margin-top: 23px; }
.forgot { margin-top: 20px; text-align: right; font-size: 17.1px; line-height: 24px; color: #666; }
.login-btn { margin-top: 26px; height: 56px; border-radius: 6px; background: #6c5ce7; color: #fff; font-size: 23px; line-height: 54px; text-align: center; }
.signup { margin-top: 12px; text-align: center; font-size: 20px; line-height: 26px; }
.signup u { color: #0000ee; }
.art { flex: 1; background: #6c5ce7; display: flex; align-items: center; padding: 0 0 1px 87px; font-size: 22.6px; color: #000; }
.art svg { margin-top: -2px; }

/* Taskbar */
.taskbar { position: relative; height: 60px; flex: none; border-top: 1px solid #5d4445; display: flex; align-items: center; padding-bottom: 1px; background: linear-gradient(90deg, #2b2228 0, #35201e 60px, #3c1f15 120px, #421d15 200px, #501817 245px, #491320 300px, #47121f 560px, #591616 585px, #3d2314 610px, #302714 680px, #2c2615 1050px, #45201a 1080px, #511719 1100px, #4a1426 1150px, #40162a 1360px, #2c1e2f 1400px, #1e2531 1440px, #1d2130 1500px, #16233a 1560px, #13263f 1700px, #12233f 1920px); }
.weather { display: flex; width: 503px; padding-left: 25px; }
.weather-icon { position: relative; margin-top: 6px; }
.weather-icon i { position: absolute; left: 14px; top: -9px; width: 20px; height: 20px; border-radius: 50%; background: #ff99a4; color: #222; font-size: 13px; line-height: 20px; text-align: center; }
.weather-text { display: flex; flex-direction: column; font-size: 14.5px; line-height: 20px; margin: 0 0 0 9px; align-items: flex-start; }
.weather-text small { font-size: 14.5px; color: #c9bfc0; }
.dock { display: flex; align-items: center; gap: 25px; }
.ti { width: 30px; height: 30px; flex: none; }
.search-pill { width: 275px; height: 40px; margin: 0 -9px 0 -10px; border-radius: 20px; border: 1px solid rgba(255, 255, 255, .16); background: rgba(255, 255, 255, .14); display: flex; align-items: center; padding: 0 6px 0 14px; font-size: 18px; color: #e0dad4; }
.search-pill span { margin-left: 12px; }
.art-icon { margin-left: auto; }
.gpt { background: #74aa9c; border-radius: 4px; display: flex; align-items: center; justify-content: center; color: #fff; }
.hp { background: #0096d6; border-radius: 2px; color: #fff; display: flex; align-items: center; justify-content: center; font: italic 10.5px "Open Sans", sans-serif; letter-spacing: -.4px; }
.hp b { font-size: 13px; }
.chrome { position: relative; }
.chrome::before { content: ""; position: absolute; left: -10px; top: -10px; width: 50px; height: 50px; border-radius: 6px; background: rgba(255, 255, 255, .07); }
.chrome::after { content: ""; position: absolute; left: -10px; top: -10px; width: 45px; height: 50px; border-radius: 6px; border-right: 1px solid rgba(255, 255, 255, .12); }
.chrome svg { position: relative; }
.badge { position: absolute; left: 16px; top: -6px; width: 20px; height: 20px; border-radius: 50%; background: #0288d1; color: #cfe8f6; font: 11px/20px Roboto, sans-serif; text-align: center; }
.active-bar { position: absolute; left: 5px; top: 35px; width: 20px; height: 4px; border-radius: 2px; background: #4cc2ff; }
.wa { position: relative; }
.idle-bar { position: absolute; left: 11px; top: 35px; width: 8px; height: 4px; border-radius: 2px; background: #a8929b; }
.tray { display: flex; align-items: center; margin-left: auto; padding-right: 24px; font-size: 15px; line-height: 20px; color: #fff; }
.tr-sync { margin-left: 23px; }
.tr-mic { margin-left: 22px; }
.lang { display: flex; flex-direction: column; align-items: center; margin: 0 0 0 25px; width: 30px; letter-spacing: -.2px; }
.tr-wifi { margin-left: 22px; }
.tr-vol { margin-left: 9px; }
.tr-bat { margin-left: 9px; }
.clock { display: flex; flex-direction: column; align-items: flex-end; margin: -2px 0 0 19px; width: 78px; }

/* Floating call window */
.meet { position: absolute; left: 1423px; top: 111px; width: 437px; height: 124px; border: 1px solid #4b504b; border-radius: 9px; background: #202125; box-shadow: 0 18px 38px rgba(0, 0, 0, .4); }
.meet-head { height: 46px; display: flex; align-items: center; padding-left: 20px; font-size: 15.5px; letter-spacing: -.25px; color: #fff; }
.meet-head span { margin: -1px 0 0 14px; }
.mh-cam { margin-left: auto; }
.mh-pip { margin-left: 16px; }
.mh-x { margin: 0 16px 0 19px; }
.meet-row { display: flex; gap: 11.5px; padding: 12px 0 0 22.5px; }
.mb { width: 77px; height: 63px; border-radius: 31px; background: #333438; display: flex; align-items: center; justify-content: center; color: #e3e3e3; }
.mb.hand { background: #424346; }
.mb.dots { width: 37px; border-radius: 19px; }
.mb.end { background: #dc362e; }
.grip { position: absolute; left: 2px; top: 103px; }
.speck { position: absolute; left: 225px; top: 53px; width: 4px; height: 4px; border-radius: 50%; background: #47484c; }
```
